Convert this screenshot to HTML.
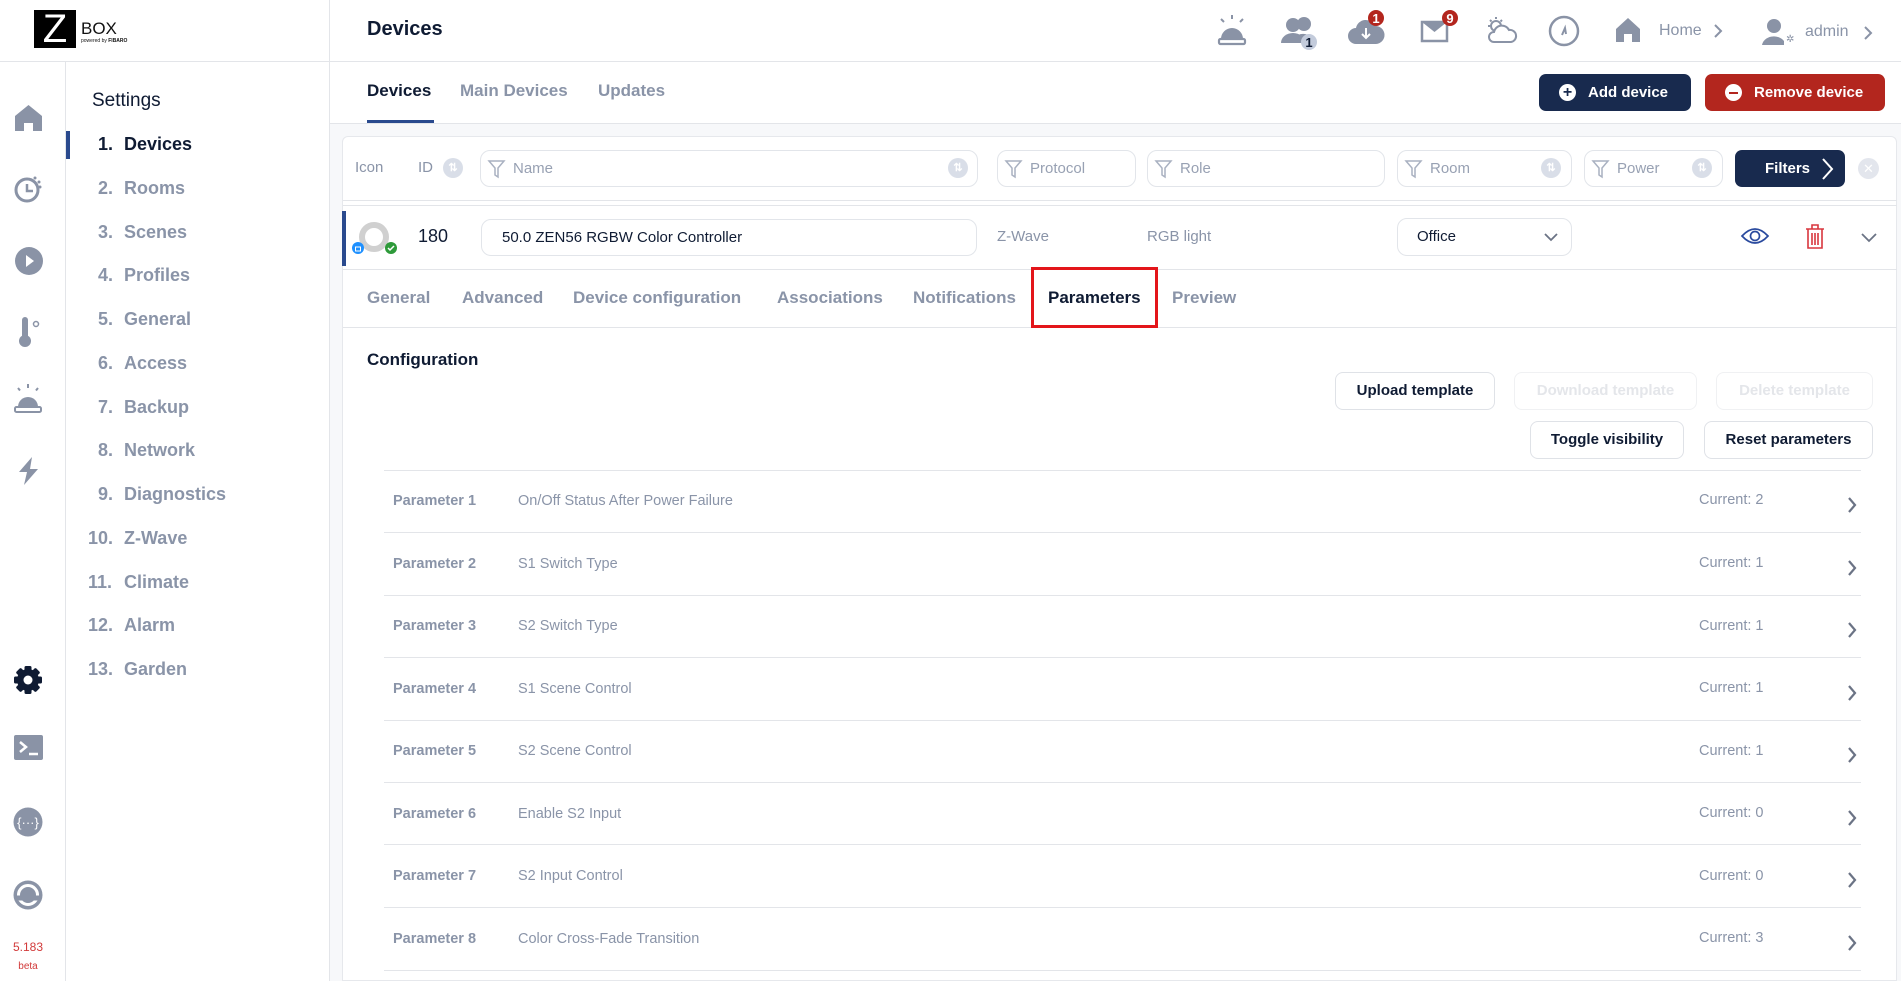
<!DOCTYPE html>
<html><head><meta charset="utf-8"><style>
*{box-sizing:border-box;margin:0;padding:0}
body{width:1901px;height:981px;overflow:hidden;background:#fff;font-family:"Liberation Sans",Arial,sans-serif;position:relative;color:#0f1b33}
.a{position:absolute}
.g{color:#8a94a8}
.ic{fill:#8a93a6}
.sb{font-size:18px;font-weight:bold;color:#8a94a8}
.tab{font-size:17px;font-weight:bold;color:#8a94a8}
.inp{border:1px solid #e2e5ea;border-radius:10px;background:#fff}
.btn{border:1px solid #dfe2e7;border-radius:8px;background:#fff;font-size:15px;font-weight:bold;text-align:center;line-height:36px;color:#0f1b33}
.row{position:absolute;left:384px;width:1477px;height:1px;background:#e3e5e9}
.pt{position:absolute;font-size:14.5px;color:#8a94a8}
.srt{position:absolute;width:20px;height:20px;border-radius:50%;background:#d9dee8;color:#fff;font-size:11px;text-align:center;line-height:20px;font-weight:bold}
.chev{position:absolute;left:1846px}
</style></head><body>
<div class="a" style="left:34px;top:10px;width:42px;height:38px;background:#000;color:#fff;font-size:40px;line-height:38px;text-align:center">Z</div>
<div class="a" style="left:81px;top:19px;font-size:17px;color:#111">BOX</div>
<div class="a" style="left:81px;top:38px;font-size:5px;color:#111">powered by <b>FIBARO</b></div>
<div class="a" style="left:0;top:61px;width:1901px;height:1px;background:#e3e5e9"></div>
<div class="a" style="left:329px;top:0;width:1px;height:981px;background:#e3e5e9"></div>
<div class="a" style="left:65px;top:61px;width:1px;height:920px;background:#e3e5e9"></div>
<div class="a" style="left:367px;top:18px;font-size:20px;font-weight:bold">Devices</div>

<svg class="a" style="left:1215px;top:13px" width="34" height="34" viewBox="0 0 34 34"><path class="ic" d="M6 26a11 11 0 0 1 22 0z"/><rect x="4" y="26" width="26" height="5" rx="1.5" fill="none" stroke="#8a93a6" stroke-width="2.2"/><path d="M17 2v4M6 6l3 3M28 6l-3 3" stroke="#8a93a6" stroke-width="2"/></svg>
<svg class="a" style="left:1280px;top:15px" width="40" height="36" viewBox="0 0 40 36"><circle class="ic" cx="13" cy="10" r="7"/><path class="ic" d="M1 28a12 10 0 0 1 24 0z"/><circle class="ic" cx="24" cy="9" r="7"/><path class="ic" d="M18 20a11 9 0 0 1 16 6v2H20z"/><circle cx="29" cy="27" r="8" fill="#c3cbdb"/><text x="29" y="32" font-size="13" font-weight="bold" text-anchor="middle" fill="#0f1b33" font-family="Liberation Sans">1</text></svg>
<svg class="a" style="left:1348px;top:8px" width="40" height="40" viewBox="0 0 40 40"><path class="ic" d="M8 36a8 8 0 0 1 0-16a10 10 0 0 1 19-2a8 8 0 0 1 1 18z"/><path d="M18 20v10M14 26l4 4 4-4" stroke="#fff" stroke-width="2" fill="none"/><circle cx="28" cy="10" r="8" fill="#b3261e"/><text x="28" y="15" font-size="13" font-weight="bold" text-anchor="middle" fill="#fff" font-family="Liberation Sans">1</text></svg>
<svg class="a" style="left:1420px;top:8px" width="42" height="40" viewBox="0 0 42 40"><rect x="2" y="14" width="25" height="19" fill="none" stroke="#8a93a6" stroke-width="2.5"/><path class="ic" d="M2 14h25l-12.5 10z"/><circle cx="30" cy="10" r="8" fill="#b3261e"/><text x="30" y="15" font-size="13" font-weight="bold" text-anchor="middle" fill="#fff" font-family="Liberation Sans">9</text></svg>
<svg class="a" style="left:1485px;top:15px" width="34" height="30" viewBox="0 0 34 30"><circle cx="11" cy="11" r="5" fill="none" stroke="#8a93a6" stroke-width="2"/><path d="M11 2v2M3 11h2M5 5l1.5 1.5M17 5l-1.5 1.5" stroke="#8a93a6" stroke-width="2"/><path d="M9 27a5 5 0 0 1 0-10a8 8 0 0 1 15-2a6 6 0 0 1 2 12z" fill="#fff" stroke="#8a93a6" stroke-width="2"/></svg>
<svg class="a" style="left:1547px;top:14px" width="34" height="34" viewBox="0 0 34 34"><circle cx="17" cy="17" r="14" fill="none" stroke="#8a93a6" stroke-width="2.5"/><path d="M15 21l3-7 1 6" stroke="#8a93a6" stroke-width="2" fill="none"/></svg>
<svg class="a" style="left:1614px;top:16px" width="28" height="28" viewBox="0 0 28 28"><path class="ic" d="M14 2L2 13v13h8v-8h8v8h8V13z"/></svg>
<div class="a g" style="left:1659px;top:22px;font-size:16px">Home</div>
<svg class="a" style="left:1712px;top:23px" width="12" height="16"><path d="M3 2l6 6-6 6" stroke="#8a93a6" stroke-width="2" fill="none"/></svg>
<svg class="a" style="left:1762px;top:18px" width="32" height="28" viewBox="0 0 32 28"><circle class="ic" cx="12" cy="8" r="7"/><path class="ic" d="M0 27a12 10 0 0 1 22 -4v4z"/><text x="24" y="24" font-size="10" fill="#8a93a6" font-family="Liberation Sans">✲</text></svg>
<div class="a g" style="left:1805px;top:23px;font-size:16px">admin</div>
<svg class="a" style="left:1862px;top:25px" width="12" height="16"><path d="M3 2l6 6-6 6" stroke="#8a93a6" stroke-width="2" fill="none"/></svg>

<svg class="a" style="left:14px;top:104px" width="29" height="28" viewBox="0 0 29 28"><path class="ic" d="M14.5 1L1 12v15h9v-8h9v8h9V12z"/></svg>
<svg class="a" style="left:13px;top:174px" width="30" height="30" viewBox="0 0 30 30"><circle cx="14" cy="16" r="11" fill="none" stroke="#8a93a6" stroke-width="3"/><path d="M14 10v7h6" stroke="#8a93a6" stroke-width="2.5" fill="none"/><circle class="ic" cx="22" cy="4" r="1.5"/><circle class="ic" cx="26" cy="8" r="1.5"/><circle class="ic" cx="27" cy="13" r="1.5"/></svg>
<svg class="a" style="left:14px;top:246px" width="30" height="30" viewBox="0 0 30 30"><circle class="ic" cx="15" cy="15" r="14"/><path d="M12 9l8 6-8 6z" fill="#fff"/></svg>
<svg class="a" style="left:18px;top:315px" width="26" height="34" viewBox="0 0 26 34"><rect class="ic" x="4" y="2" width="6" height="22" rx="3"/><circle class="ic" cx="7" cy="26" r="6"/><circle cx="18" cy="9" r="2.5" fill="none" stroke="#8a93a6" stroke-width="1.5"/></svg>
<svg class="a" style="left:13px;top:384px" width="30" height="30" viewBox="0 0 30 30"><path class="ic" d="M5 23a10 10 0 0 1 20 0z"/><rect x="2" y="23" width="26" height="5" rx="1.5" fill="none" stroke="#8a93a6" stroke-width="2"/><path d="M15 0v4M5 4l2 2.5M25 4l-2 2.5" stroke="#8a93a6" stroke-width="2"/></svg>
<svg class="a" style="left:16px;top:456px" width="26" height="30" viewBox="0 0 26 30"><path class="ic" d="M16 1L3 16h8l-3 13 14-16h-8z"/></svg>
<svg class="a" style="left:12px;top:664px" width="32" height="32" viewBox="0 0 32 32"><g fill="#0f1b33"><circle cx="16" cy="16" r="11"/><g id="t"><rect x="12.5" y="2" width="7" height="6" rx="1.5"/><rect x="12.5" y="24" width="7" height="6" rx="1.5"/><rect x="2" y="12.5" width="6" height="7" rx="1.5"/><rect x="24" y="12.5" width="6" height="7" rx="1.5"/></g><use href="#t" transform="rotate(45 16 16)"/></g><circle cx="16" cy="16" r="4.5" fill="#fff"/></svg>
<svg class="a" style="left:14px;top:735px" width="30" height="26" viewBox="0 0 30 26"><rect class="ic" x="0" y="0" width="29" height="25" rx="2"/><path d="M6 7l6 5-6 5" stroke="#fff" stroke-width="2.5" fill="none"/><path d="M15 19h9" stroke="#fff" stroke-width="2.5"/></svg>
<svg class="a" style="left:13px;top:807px" width="30" height="30" viewBox="0 0 30 30"><circle class="ic" cx="15" cy="15" r="14.5"/><text x="15" y="20" font-size="13" fill="#fff" text-anchor="middle" font-family="Liberation Sans">{···}</text></svg>
<svg class="a" style="left:13px;top:880px" width="30" height="30" viewBox="0 0 30 30"><circle class="ic" cx="15" cy="15" r="14.5"/><circle cx="15" cy="15" r="9.5" fill="none" stroke="#fff" stroke-width="3"/><path d="M4 18h5M21 18h5" stroke="#8a93a6" stroke-width="5"/></svg>
<div class="a" style="left:0;top:940px;width:56px;text-align:center;font-size:12px;color:#d23a3a">5.183</div>
<div class="a" style="left:0;top:961px;width:56px;text-align:center;font-size:10px;color:#d23a3a">beta</div>

<div class="a" style="left:92px;top:90px;font-size:19px">Settings</div>
<div class="a" style="left:66px;top:131px;width:4px;height:28px;background:#2a4a8e"></div>
<div class="a sb" style="left:0;top:134px;width:330px;height:600px">
<div class="a" style="top:0;left:98px;color:#0f1b33">1.</div><div class="a" style="top:0;left:124px;color:#0f1b33">Devices</div>
<div class="a" style="top:44px;left:98px">2.</div><div class="a" style="top:44px;left:124px">Rooms</div>
<div class="a" style="top:88px;left:98px">3.</div><div class="a" style="top:88px;left:124px">Scenes</div>
<div class="a" style="top:131px;left:98px">4.</div><div class="a" style="top:131px;left:124px">Profiles</div>
<div class="a" style="top:175px;left:98px">5.</div><div class="a" style="top:175px;left:124px">General</div>
<div class="a" style="top:219px;left:98px">6.</div><div class="a" style="top:219px;left:124px">Access</div>
<div class="a" style="top:263px;left:98px">7.</div><div class="a" style="top:263px;left:124px">Backup</div>
<div class="a" style="top:306px;left:98px">8.</div><div class="a" style="top:306px;left:124px">Network</div>
<div class="a" style="top:350px;left:98px">9.</div><div class="a" style="top:350px;left:124px">Diagnostics</div>
<div class="a" style="top:394px;left:88px">10.</div><div class="a" style="top:394px;left:124px">Z-Wave</div>
<div class="a" style="top:438px;left:88px">11.</div><div class="a" style="top:438px;left:124px">Climate</div>
<div class="a" style="top:481px;left:88px">12.</div><div class="a" style="top:481px;left:124px">Alarm</div>
<div class="a" style="top:525px;left:88px">13.</div><div class="a" style="top:525px;left:124px">Garden</div>
</div>

<div class="a tab" style="left:367px;top:81px;color:#0f1b33">Devices</div>
<div class="a tab" style="left:460px;top:81px">Main Devices</div>
<div class="a tab" style="left:598px;top:81px">Updates</div>
<div class="a" style="left:367px;top:120px;width:67px;height:3px;background:#2a4a8e"></div>
<div class="a" style="left:1539px;top:74px;width:152px;height:37px;background:#182a4e;border-radius:7px;color:#fff;font-weight:bold;font-size:15px;line-height:37px;padding-left:49px">Add device</div>
<div class="a" style="left:1559px;top:84px;width:17px;height:17px;border-radius:50%;background:#fff;color:#182a4e;font-size:16px;line-height:17px;text-align:center;font-weight:bold">+</div>
<div class="a" style="left:1705px;top:74px;width:180px;height:37px;background:#b3261e;border-radius:7px;color:#fff;font-weight:bold;font-size:15px;line-height:37px;padding-left:49px">Remove device</div>
<div class="a" style="left:1725px;top:84px;width:17px;height:17px;border-radius:50%;background:#fff"><div style="margin:7.5px 4px;height:2px;background:#b3261e"></div></div>

<div class="a" style="left:330px;top:123px;width:1571px;height:858px;background:#f7f8fa;border-top:1px solid #e3e5e9"></div>
<div class="a" style="left:342px;top:136px;width:1555px;height:845px;background:#fff;border:1px solid #e6e8ec;border-radius:6px 6px 0 0"></div>
<div class="a" style="left:343px;top:200px;width:1554px;height:1px;background:#e3e5e9"></div>
<div class="a" style="left:343px;top:205px;width:1554px;height:1px;background:#e3e5e9"></div>
<div class="a" style="left:343px;top:269px;width:1554px;height:1px;background:#e3e5e9"></div>
<div class="a" style="left:343px;top:327px;width:1554px;height:1px;background:#e3e5e9"></div>

<div class="a g" style="left:355px;top:159px;font-size:15px">Icon</div>
<div class="a g" style="left:418px;top:159px;font-size:15px">ID</div>
<div class="srt" style="left:443px;top:158px">⇅</div>
<div class="a inp" style="left:480px;top:150px;width:498px;height:37px"></div>
<div class="srt" style="left:948px;top:158px">⇅</div>
<div class="a inp" style="left:997px;top:150px;width:139px;height:37px"></div>
<div class="a inp" style="left:1147px;top:150px;width:238px;height:37px"></div>
<div class="a inp" style="left:1397px;top:150px;width:175px;height:37px"></div>
<div class="srt" style="left:1541px;top:158px">⇅</div>
<div class="a inp" style="left:1584px;top:150px;width:139px;height:37px"></div>
<div class="srt" style="left:1692px;top:158px">⇅</div>
<svg class="a" style="left:0;top:0" width="1901" height="200"><g fill="none" stroke="#a9b1c1" stroke-width="1.5"><path d="M489 161h15l-6 7v9l-3-2v-7z"/><path d="M1006 161h15l-6 7v9l-3-2v-7z"/><path d="M1156 161h15l-6 7v9l-3-2v-7z"/><path d="M1406 161h15l-6 7v9l-3-2v-7z"/><path d="M1593 161h15l-6 7v9l-3-2v-7z"/></g></svg>
<div class="a" style="left:513px;top:160px;font-size:15px;color:#98a1b3">Name</div>
<div class="a" style="left:1030px;top:160px;font-size:15px;color:#98a1b3">Protocol</div>
<div class="a" style="left:1180px;top:160px;font-size:15px;color:#98a1b3">Role</div>
<div class="a" style="left:1430px;top:160px;font-size:15px;color:#98a1b3">Room</div>
<div class="a" style="left:1617px;top:160px;font-size:15px;color:#98a1b3">Power</div>
<div class="a" style="left:1735px;top:150px;width:110px;height:37px;background:#182a4e;border-radius:7px;color:#fff;font-weight:bold;font-size:15px;line-height:37px;padding-left:30px">Filters</div>
<svg class="a" style="left:1820px;top:157px" width="14" height="24"><path d="M3 2l9 10-9 10" stroke="#fff" stroke-width="2" fill="none"/></svg>
<div class="a" style="left:1858px;top:158px;width:21px;height:21px;border-radius:50%;background:#e3e6ed;color:#fff;text-align:center;font-size:13px;line-height:21px">✕</div>

<div class="a" style="left:342px;top:211px;width:4px;height:55px;background:#2a4a8e"></div>
<svg class="a" style="left:350px;top:216px" width="50" height="46" viewBox="0 0 50 46"><circle cx="24" cy="21" r="12" fill="none" stroke="#d0d0d0" stroke-width="6"/><circle cx="8" cy="32" r="6" fill="#1e90ff"/><rect x="5.5" y="31" width="5" height="4" fill="none" stroke="#fff" stroke-width="1"/><circle cx="41" cy="32" r="6" fill="#2e9a3a"/><path d="M38 32l2 2 4-4" stroke="#fff" stroke-width="1.5" fill="none"/></svg>
<div class="a" style="left:418px;top:226px;font-size:18px">180</div>
<div class="a inp" style="left:481px;top:219px;width:496px;height:37px;font-size:15px;line-height:35px;padding-left:20px;color:#0f1b33">50.0 ZEN56 RGBW Color Controller</div>
<div class="a g" style="left:997px;top:228px;font-size:15px">Z-Wave</div>
<div class="a g" style="left:1147px;top:228px;font-size:15px">RGB light</div>
<div class="a inp" style="left:1397px;top:218px;width:175px;height:38px;font-size:15px;line-height:36px;padding-left:19px;color:#0f1b33">Office</div>
<svg class="a" style="left:1543px;top:231px" width="16" height="12"><path d="M2 3l6 6 6-6" stroke="#6b7385" stroke-width="1.8" fill="none"/></svg>
<svg class="a" style="left:1740px;top:226px" width="30" height="20"><path d="M2 10q13-14 26 0q-13 14-26 0z" fill="none" stroke="#2a4a9e" stroke-width="1.7"/><circle cx="15" cy="10" r="4.5" fill="none" stroke="#2a4a9e" stroke-width="1.7"/></svg>
<svg class="a" style="left:1804px;top:223px" width="22" height="28"><g fill="none" stroke="#d9363e" stroke-width="1.6"><path d="M2 6h18M8 6V2h6v4"/><path d="M4 6v19h14V6"/><path d="M8 10v12M11 10v12M14 10v12"/></g></svg>
<svg class="a" style="left:1860px;top:232px" width="18" height="12"><path d="M2 2l7 7 7-7" stroke="#6b7385" stroke-width="1.8" fill="none"/></svg>

<div class="a tab" style="left:367px;top:288px">General</div>
<div class="a tab" style="left:462px;top:288px">Advanced</div>
<div class="a tab" style="left:573px;top:288px">Device configuration</div>
<div class="a tab" style="left:777px;top:288px">Associations</div>
<div class="a tab" style="left:913px;top:288px">Notifications</div>
<div class="a tab" style="left:1048px;top:288px;color:#0f1b33">Parameters</div>
<div class="a tab" style="left:1172px;top:288px">Preview</div>
<div class="a" style="left:1031px;top:267px;width:127px;height:61px;border:3px solid #e3151a"></div>

<div class="a" style="left:367px;top:350px;font-size:17px;font-weight:bold">Configuration</div>
<div class="a btn" style="left:1335px;top:372px;width:160px;height:38px">Upload template</div>
<div class="a btn" style="left:1514px;top:372px;width:183px;height:38px;color:#e4e6ea;border-color:#f0f1f3">Download template</div>
<div class="a btn" style="left:1716px;top:372px;width:157px;height:38px;color:#e4e6ea;border-color:#f0f1f3">Delete template</div>
<div class="a btn" style="left:1530px;top:421px;width:154px;height:38px">Toggle visibility</div>
<div class="a btn" style="left:1704px;top:421px;width:169px;height:38px">Reset parameters</div>

<div class="row" style="top:470px"></div>
<div class="row" style="top:532px"></div>
<div class="row" style="top:595px"></div>
<div class="row" style="top:657px"></div>
<div class="row" style="top:720px"></div>
<div class="row" style="top:782px"></div>
<div class="row" style="top:844px"></div>
<div class="row" style="top:907px"></div>
<div class="row" style="top:970px"></div>

<div class="pt" style="left:393px;top:493px;font-weight:bold">Parameter 1</div><div class="pt" style="left:518px;top:493px">On/Off Status After Power Failure</div><div class="pt" style="left:1699px;top:492px">Current: 2</div><svg class="chev" style="top:496px" width="12" height="18"><path d="M3 2l6 7-6 7" stroke="#6b7385" stroke-width="2.2" fill="none"/></svg>
<div class="pt" style="left:393px;top:556px;font-weight:bold">Parameter 2</div><div class="pt" style="left:518px;top:556px">S1 Switch Type</div><div class="pt" style="left:1699px;top:555px">Current: 1</div><svg class="chev" style="top:559px" width="12" height="18"><path d="M3 2l6 7-6 7" stroke="#6b7385" stroke-width="2.2" fill="none"/></svg>
<div class="pt" style="left:393px;top:618px;font-weight:bold">Parameter 3</div><div class="pt" style="left:518px;top:618px">S2 Switch Type</div><div class="pt" style="left:1699px;top:618px">Current: 1</div><svg class="chev" style="top:621px" width="12" height="18"><path d="M3 2l6 7-6 7" stroke="#6b7385" stroke-width="2.2" fill="none"/></svg>
<div class="pt" style="left:393px;top:681px;font-weight:bold">Parameter 4</div><div class="pt" style="left:518px;top:681px">S1 Scene Control</div><div class="pt" style="left:1699px;top:680px">Current: 1</div><svg class="chev" style="top:684px" width="12" height="18"><path d="M3 2l6 7-6 7" stroke="#6b7385" stroke-width="2.2" fill="none"/></svg>
<div class="pt" style="left:393px;top:743px;font-weight:bold">Parameter 5</div><div class="pt" style="left:518px;top:743px">S2 Scene Control</div><div class="pt" style="left:1699px;top:743px">Current: 1</div><svg class="chev" style="top:746px" width="12" height="18"><path d="M3 2l6 7-6 7" stroke="#6b7385" stroke-width="2.2" fill="none"/></svg>
<div class="pt" style="left:393px;top:806px;font-weight:bold">Parameter 6</div><div class="pt" style="left:518px;top:806px">Enable S2 Input</div><div class="pt" style="left:1699px;top:805px">Current: 0</div><svg class="chev" style="top:809px" width="12" height="18"><path d="M3 2l6 7-6 7" stroke="#6b7385" stroke-width="2.2" fill="none"/></svg>
<div class="pt" style="left:393px;top:868px;font-weight:bold">Parameter 7</div><div class="pt" style="left:518px;top:868px">S2 Input Control</div><div class="pt" style="left:1699px;top:868px">Current: 0</div><svg class="chev" style="top:871px" width="12" height="18"><path d="M3 2l6 7-6 7" stroke="#6b7385" stroke-width="2.2" fill="none"/></svg>
<div class="pt" style="left:393px;top:931px;font-weight:bold">Parameter 8</div><div class="pt" style="left:518px;top:931px">Color Cross-Fade Transition</div><div class="pt" style="left:1699px;top:930px">Current: 3</div><svg class="chev" style="top:934px" width="12" height="18"><path d="M3 2l6 7-6 7" stroke="#6b7385" stroke-width="2.2" fill="none"/></svg>
</body></html>
